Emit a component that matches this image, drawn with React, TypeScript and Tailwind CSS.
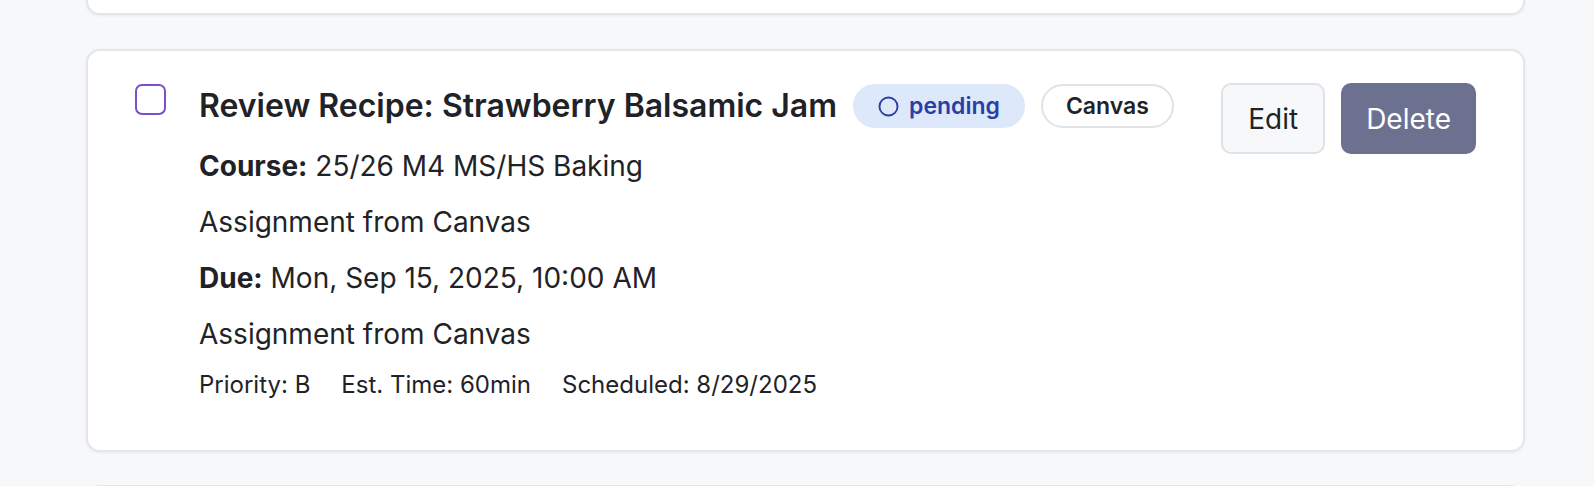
import React from 'react';

function Badge({ children, tone }: { children: React.ReactNode; tone: 'status' | 'source' }) {
  const cls =
    tone === 'status'
      ? 'bg-[#dde8fb] text-[#2a3fa6] border-[#dde8fb]'
      : 'bg-white text-[#1f2328] border-[#dfe2e7]';
  return (
    <span className={`inline-flex h-[44px] items-center gap-[10px] rounded-full border-2 px-[23px] text-[23px] font-semibold ${cls}`}>
      {children}
    </span>
  );
}

function TaskCard() {
  return (
    <div className="flex items-start rounded-[14px] border-2 border-[#e3e6eb] bg-white pl-[47px] pr-[47px] pt-[32px] pb-[50px] shadow-[0_1px_3px_rgba(0,0,0,0.06)]">
      {/* checkbox */}
      <button className="mt-[1px] h-[31px] w-[31px] shrink-0 rounded-[7px] border-2 border-[#7b4fc9] bg-white" />

      <div className="ml-[33px] flex-1">
        <div className="mt-[1px] flex h-[44px] items-center gap-[16px]">
          <h3 className="text-[32px] font-semibold text-[#1f2328]">Review Recipe: Strawberry Balsamic Jam</h3>
          <Badge tone="status">
            <svg width="21" height="21" viewBox="0 0 20 20" fill="none">
              <circle cx="10" cy="10" r="8.6" stroke="currentColor" strokeWidth="1.8" />
            </svg>
            pending
          </Badge>
          <Badge tone="source">Canvas</Badge>
        </div>

        <div className="mt-[21px] flex flex-col gap-[22px] text-[28px] leading-[34px] text-[#1f2328]">
          <p>
            <span className="font-bold">Course:</span> 25/26 M4 MS/HS Baking
          </p>
          <p>Assignment from Canvas</p>
          <p>
            <span className="font-bold">Due:</span> Mon, Sep 15, 2025, 10:00 AM
          </p>
          <p>Assignment from Canvas</p>
        </div>

        <div className="mt-[19px] flex gap-[31px] text-[24px] leading-[30px] text-[#1f2328]">
          <span>Priority: B</span>
          <span>Est. Time: 60min</span>
          <span>Scheduled: 8/29/2025</span>
        </div>
      </div>

      <div className="flex shrink-0 gap-[16px]">
        <button className="h-[71px] rounded-[10px] border-2 border-[#dfe2e7] bg-[#f7f8fa] px-[25px] text-[28px] text-[#1f2328]">
          Edit
        </button>
        <button className="h-[71px] rounded-[10px] bg-[#6c7190] px-[25px] text-[28px] text-white">
          Delete
        </button>
      </div>
    </div>
  );
}

export default function App() {
  return (
    <div className="min-h-screen overflow-hidden bg-[#f7f8fa] font-['Inter',sans-serif]">
      <div className="-mt-[400px] flex flex-col pl-[86px] pr-[69px]">
        <div className="h-[415px] rounded-[14px] border-2 border-[#e3e6eb] bg-white shadow-[0_1px_3px_rgba(0,0,0,0.06)]" />
        <div className="mt-[34px]">
          <TaskCard />
        </div>
        <div className="mt-[33px] h-[300px] rounded-[14px] border-2 border-[#e3e6eb] bg-white" />
      </div>
    </div>
  );
}
